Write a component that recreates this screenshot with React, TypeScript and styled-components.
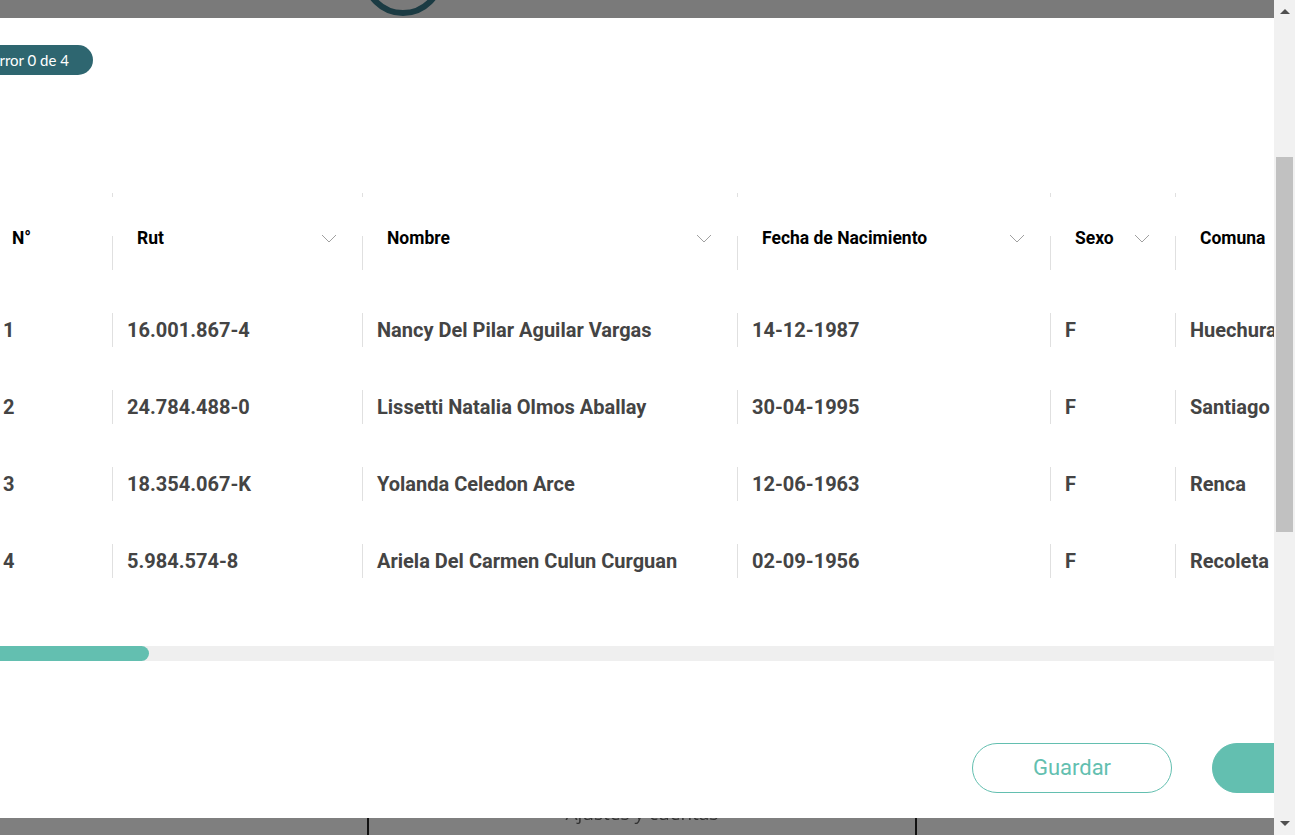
import * as React from "react";
import styled, { createGlobalStyle } from "styled-components";

const GlobalStyle = createGlobalStyle`
  html, body {
    margin: 0;
    padding: 0;
    overflow: hidden;
    background: #7b7b7b;
  }
  * {
    box-sizing: border-box;
  }
`;

const Screen = styled("div")`
  display: flex;
  width: 1295px;
  height: 835px;
  overflow: hidden;
`;

const Main = styled("div")`
  display: flex;
  flex-direction: column;
  width: 1274px;
  height: 835px;
  overflow: hidden;
  background: #7b7b7b;
`;

const TopStrip = styled("div")`
  position: relative;
  height: 18px;
  flex-shrink: 0;
  background: #7a7a7a;
`;

const Ring = styled("svg")`
  position: absolute;
  left: 358px;
  top: -70px;
`;

const BottomStrip = styled("div")`
  display: flex;
  height: 17px;
  flex-shrink: 0;
  background: #7f7f7f;
  overflow: hidden;
`;

const StripSide = styled("div")<{ $w: number }>`
  width: ${(p) => p.$w}px;
  flex-shrink: 0;
`;

const StripTab = styled("div")`
  width: 550px;
  flex-shrink: 0;
  border-left: 2px solid #111;
  border-right: 2px solid #111;
  display: flex;
  justify-content: center;
`;

const StripLabel = styled("span")`
  font-family: "Open Sans", sans-serif;
  font-size: 19px;
  color: #333;
  line-height: 20px;
  margin-top: -15px;
  filter: blur(0.4px);
`;

const Modal = styled("div")`
  width: 1483px;
  height: 800px;
  flex-shrink: 0;
  margin-left: -31px;
  background: #fff;
  display: flex;
  flex-direction: column;
  padding: 27px 40px 25px 0;
`;

const Badge = styled("div")`
  align-self: flex-start;
  height: 30px;
  padding: 0 24px 0 22px;
  border-radius: 15px;
  background: #2e6670;
  color: #fff;
  font-family: Lato, sans-serif;
  font-size: 15px;
  display: flex;
  align-items: center;
`;

const Table = styled("div")`
  margin-top: 118px;
  margin-left: 19px;
  display: flex;
  flex-direction: column;
`;

const HeadRow = styled("div")`
  display: flex;
  height: 77px;
`;

const HeadCell = styled("div")<{ $w: number; $sep?: boolean }>`
  position: relative;
  width: ${(p) => p.$w}px;
  flex-shrink: 0;
  display: flex;
  align-items: center;
  justify-content: space-between;
  padding: 13px 25px 0 ${(p) => (p.$sep ? 25 : 24)}px;
  font-family: Roboto, sans-serif;
  font-weight: 700;
  font-size: 17.5px;
  color: #000;
  white-space: nowrap;

  &::before,
  &::after {
    content: "";
    position: absolute;
    left: 0;
    width: 1px;
    background: #e0e0e0;
    display: ${(p) => (p.$sep ? "block" : "none")};
  }
  &::before {
    top: 0;
    height: 4px;
  }
  &::after {
    top: 43px;
    height: 34px;
  }
`;

const Body = styled("div")`
  margin-top: 21px;
  display: flex;
  flex-direction: column;
`;

const Row = styled("div")`
  display: flex;
  height: 77px;
  align-items: center;
`;

const Cell = styled("div")<{ $w: number; $sep?: boolean }>`
  width: ${(p) => p.$w}px;
  flex-shrink: 0;
  height: 34px;
  display: flex;
  align-items: center;
  padding-left: ${(p) => (p.$sep ? 14 : 15)}px;
  border-left: ${(p) => (p.$sep ? "1px solid #e0e0e0" : "none")};
  font-family: Roboto, sans-serif;
  font-weight: 700;
  font-size: 20px;
  color: #444;
  white-space: nowrap;
  overflow: hidden;
`;

const HScroll = styled("div")`
  margin-top: 47px;
  height: 15px;
  background: #efefef;
  display: flex;
`;

const HThumb = styled("div")`
  width: 180px;
  height: 15px;
  background: #63bfb0;
  border-radius: 0 8px 8px 0;
`;

const Actions = styled("div")`
  margin-top: auto;
  display: flex;
  justify-content: flex-end;
  gap: 40px;
`;

const Button = styled("button")<{ $filled?: boolean }>`
  width: 200px;
  height: 50px;
  border-radius: 25px;
  border: 1px solid #63bfb0;
  background: ${(p) => (p.$filled ? "#63bfb0" : "#fff")};
  color: ${(p) => (p.$filled ? "#fff" : "#63bfb0")};
  font-family: Roboto, sans-serif;
  font-size: 22px;
  font-weight: 400;
  padding: 0 0 2px;
`;

const VScroll = styled("div")`
  width: 21px;
  height: 835px;
  background: #f1f1f1;
  display: flex;
  flex-direction: column;
  align-items: center;
`;

const Arrow = styled("div")<{ $down?: boolean }>`
  width: 0;
  height: 0;
  margin: ${(p) => (p.$down ? "auto 0 9px" : "9px 0 0")};
  border-left: 5px solid transparent;
  border-right: 5px solid transparent;
  ${(p) =>
    p.$down ? "border-top: 5px solid #505050;" : "border-bottom: 5px solid #505050;"}
`;

const VThumb = styled("div")`
  margin-top: 143px;
  width: 17px;
  height: 375px;
  background: #c1c1c1;
`;

const Chevron = () => (
  <svg width="16" height="9" viewBox="0 0 16 9">
    <polyline points="1,1 8,8 15,1" fill="none" stroke="#a0a0a0" strokeWidth="1" />
  </svg>
);

const columns = [
  { title: "N°", w: 124, sort: false },
  { title: "Rut", w: 250, sort: true },
  { title: "Nombre", w: 375, sort: true },
  { title: "Fecha de Nacimiento", w: 313, sort: true },
  { title: "Sexo", w: 125, sort: true },
  { title: "Comuna", w: 250, sort: true },
];

const rows = [
  ["1", "16.001.867-4", "Nancy Del Pilar Aguilar Vargas", "14-12-1987", "F", "Huechuraba"],
  ["2", "24.784.488-0", "Lissetti Natalia Olmos Aballay", "30-04-1995", "F", "Santiago"],
  ["3", "18.354.067-K", "Yolanda Celedon Arce", "12-06-1963", "F", "Renca"],
  ["4", "5.984.574-8", "Ariela Del Carmen Culun Curguan", "02-09-1956", "F", "Recoleta"],
];

export default function App() {
  return (
    <>
      <GlobalStyle />
      <Screen>
        <Main>
          <TopStrip>
            <Ring width="90" height="90" viewBox="0 0 90 90">
              <circle cx="45" cy="45" r="38" fill="none" stroke="#1b3b43" strokeWidth="6" />
            </Ring>
          </TopStrip>
          <Modal>
            <Badge>Error 0 de 4</Badge>
            <Table>
              <HeadRow>
                {columns.map((c, i) => (
                  <HeadCell key={c.title} $w={c.w} $sep={i > 0}>
                    <span>{c.title}</span>
                    {c.sort && i < columns.length - 1 && <Chevron />}
                  </HeadCell>
                ))}
              </HeadRow>
              <Body>
                {rows.map((r) => (
                  <Row key={r[0]}>
                    {r.map((v, i) => (
                      <Cell key={i} $w={columns[i].w} $sep={i > 0}>
                        {v}
                      </Cell>
                    ))}
                  </Row>
                ))}
              </Body>
            </Table>
            <HScroll>
              <HThumb />
            </HScroll>
            <Actions>
              <Button>Guardar</Button>
              <Button $filled>Enviar</Button>
            </Actions>
          </Modal>
          <BottomStrip>
            <StripSide $w={367} />
            <StripTab>
              <StripLabel>Ajustes y cuentas</StripLabel>
            </StripTab>
            <StripSide $w={355} />
          </BottomStrip>
        </Main>
        <VScroll>
          <Arrow />
          <VThumb />
          <Arrow $down />
        </VScroll>
      </Screen>
    </>
  );
}
